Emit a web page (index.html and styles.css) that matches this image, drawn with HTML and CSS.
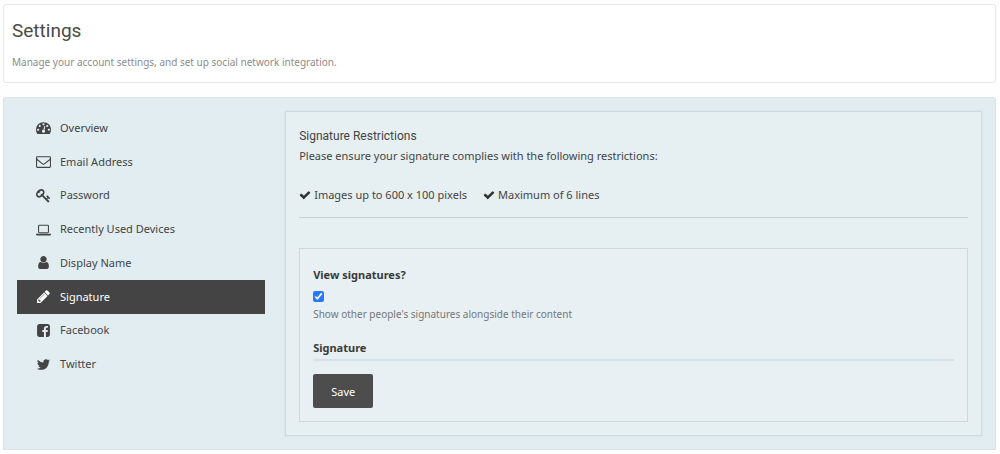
FILE: index.html
```html
<!DOCTYPE html>
<html lang="en">
<head>
<meta charset="utf-8">
<title>Settings</title>
<link rel="stylesheet" href="styles.css">
</head>
<body>
  <header class="page-header">
    <h1>Settings</h1>
    <p>Manage your account settings, and set up social network integration.</p>
  </header>

  <main class="settings">
    <nav>
      <ul class="side-menu">
        <li><a href="#overview"><svg class="icon" viewBox="0 0 1792 1792"><path d="M384 1152q0-53-37.5-90.5t-90.5-37.5-90.5 37.5-37.5 90.5 37.5 90.5 90.5 37.5 90.5-37.5 37.5-90.5zm192-448q0-53-37.5-90.5t-90.5-37.5-90.5 37.5-37.5 90.5 37.5 90.5 90.5 37.5 90.5-37.5 37.5-90.5zm428 481l101-382q6-26-7.5-48.5t-38.5-29.5-48 6.5-30 39.5l-101 382q-60 5-107 43.5t-63 98.5q-20 77 20 146t117 89 146-20 89-117q16-60-6-117t-72-91zm660-33q0-53-37.5-90.5t-90.5-37.5-90.5 37.5-37.5 90.5 37.5 90.5 90.5 37.5 90.5-37.5 37.5-90.5zm-640-640q0-53-37.5-90.5t-90.5-37.5-90.5 37.5-37.5 90.5 37.5 90.5 90.5 37.5 90.5-37.5 37.5-90.5zm448 192q0-53-37.5-90.5t-90.5-37.5-90.5 37.5-37.5 90.5 37.5 90.5 90.5 37.5 90.5-37.5 37.5-90.5zm320 448q0 261-141 483-19 29-54 29h-1402q-35 0-54-29-141-221-141-483 0-182 71-348t191-286 286-191 348-71 348 71 286 191 191 286 71 348z"/></svg>Overview</a></li>
        <li><a href="#email"><svg class="icon" viewBox="0 0 1792 1792"><path d="M1664 1504v-768q-32 36-69 66-268 206-426 338-51 43-83 67t-86.5 48.5-102.5 24.5h-2q-48 0-102.5-24.5t-86.5-48.5-83-67q-158-132-426-338-37-30-69-66v768q0 13 9.5 22.5t22.5 9.5h1472q13 0 22.5-9.5t9.5-22.5zm0-1051v-24.5l-.5-13-3-12.5-5.5-9-9-7.5-14-2.5h-1472q-13 0-22.5 9.5t-9.5 22.5q0 168 147 284 193 152 401 317 6 5 35 29.5t46 37.5 44.5 31.5 50.5 27.5 43 9h2q20 0 43-9t50.5-27.5 44.5-31.5 46-37.5 35-29.5q208-165 401-317 54-43 100.5-115.5t46.5-131.5zm128-37v1088q0 66-47 113t-113 47h-1472q-66 0-113-47t-47-113v-1088q0-66 47-113t113-47h1472q66 0 113 47t47 113z"/></svg>Email Address</a></li>
        <li><a href="#password"><svg class="icon" viewBox="0 0 1792 1792"><path d="M832 512q0-80-56-136t-136-56-136 56-56 136q0 42 19 83-41-19-83-19-80 0-136 56t-56 136 56 136 136 56 136-56 56-136q0-42-19-83 41 19 83 19 80 0 136-56t56-136zm851 704q0 17-49 66t-66 49q-9 0-28.5-16t-36.5-33-38.5-40-24.5-26l-96 96 220 220q28 28 28 68 0 42-39 81t-81 39q-40 0-68-28l-671-671q-176 131-365 131-163 0-265.5-102.5t-102.5-265.5q0-160 95-313t248-248 313-95q163 0 265.5 102.5t102.5 265.5q0 189-131 365l355 355 96-96q-3-3-26-24.5t-40-38.5-33-36.5-16-28.5q0-17 49-66t66-49q13 0 23 10 6 6 46 44.5t82 79.5 86.5 86 73 78 28.5 41z"/></svg>Password</a></li>
        <li><a href="#devices"><svg class="icon" viewBox="0 0 1792 1792"><path fill-rule="evenodd" d="M400 320h992q66 0 113 47t47 113v704q0 66-47 113t-113 47h-992q-66 0-113-47t-47-113v-704q0-66 47-113t113-47zm0 128q-32 0-32 32v704q0 32 32 32h992q32 0 32-32v-704q0-32-32-32zM0 1408h1792v96q0 40-47 68t-113 28h-1472q-66 0-113-28t-47-68z"/></svg>Recently Used Devices</a></li>
        <li><a href="#name"><svg class="icon" viewBox="0 0 1792 1792"><path d="M1536 1399q0 109-62.5 187t-150.5 78h-854q-88 0-150.5-78t-62.5-187q0-85 8.5-160.5t31.5-152 58.5-131 94-89 134.5-34.5q131 128 313 128t313-128q76 0 134.5 34.5t94 89 58.5 131 31.5 152 8.5 160.5zm-256-887q0 159-112.5 271.5t-271.5 112.5-271.5-112.5-112.5-271.5 112.5-271.5 271.5-112.5 271.5 112.5 112.5 271.5z"/></svg>Display Name</a></li>
        <li><a href="#signature" class="active"><svg class="icon" viewBox="0 0 1792 1792"><path d="M491 1536l91-91-235-235-91 91v107h128v128h107zm523-928q0-22-22-22-10 0-17 7l-542 542q-7 7-7 17 0 22 22 22 10 0 17-7l542-542q7-7 7-17zm-54-192l416 416-832 832h-416v-416zm683 96q0 53-37 90l-166 166-416-416 166-165q36-38 90-38 53 0 91 38l235 234q37 39 37 91z"/></svg>Signature</a></li>
        <li><a href="#facebook"><svg class="icon" viewBox="0 0 1792 1792"><path d="M1376 128q119 0 203.5 84.5t84.5 203.5v960q0 119-84.5 203.5t-203.5 84.5h-188v-595h199l30-232h-229v-148q0-56 23.5-84t91.5-28l122-1v-207q-63-9-178-9-136 0-217.5 80t-81.5 226v171h-200v232h200v595h-532q-119 0-203.5-84.5t-84.5-203.5v-960q0-119 84.5-203.5t203.5-84.5h960z"/></svg>Facebook</a></li>
        <li><a href="#twitter"><svg class="icon" viewBox="0 0 1792 1792"><path d="M1684 408q-67 98-162 167 1 14 1 42 0 130-38 259.5t-115.5 248.5-184.5 210.5-258 146-323 54.5q-271 0-496-145 35 4 78 4 225 0 401-138-105-2-188-64.5t-114-159.5q33 5 61 5 43 0 85-11-112-23-185.5-111.5t-73.5-205.5v-4q68 38 146 41-66-44-105-115t-39-154q0-88 44-163 121 149 294.5 238.5t371.5 99.5q-8-38-8-74 0-134 94.5-228.5t228.5-94.5q140 0 236 102 109-21 205-78-37 115-142 178 93-10 186-50z"/></svg>Twitter</a></li>
      </ul>
    </nav>

    <section class="panel">
      <h2>Signature Restrictions</h2>
      <p class="intro">Please ensure your signature complies with the following restrictions:</p>
      <ul class="restrictions">
        <li><svg class="check" viewBox="0 0 1792 1792"><path d="M1671 566q0 40-28 68l-724 724-136 136q-28 28-68 28t-68-28l-136-136-362-362q-28-28-28-68t28-68l136-136q28-28 68-28t68 28l294 295 656-657q28-28 68-28t68 28l136 136q28 28 28 68z"/></svg>Images up to 600 x 100 pixels</li>
        <li><svg class="check" viewBox="0 0 1792 1792"><path d="M1671 566q0 40-28 68l-724 724-136 136q-28 28-68 28t-68-28l-136-136-362-362q-28-28-28-68t28-68l136-136q28-28 68-28t68 28l294 295 656-657q28-28 68-28t68 28l136 136q28 28 28 68z"/></svg>Maximum of 6 lines</li>
      </ul>

      <form class="signature-form" action="" method="post">
        <label class="form-lbl" for="viewSigs">View signatures?</label>
        <input type="checkbox" id="viewSigs" name="viewsigs" checked>
        <p class="hint">Show other people's signatures alongside their content</p>
        <h3 class="form-lbl sig-title">Signature</h3>
        <button type="submit">Save</button>
      </form>
    </section>
  </main>
</body>
</html>
```

FILE: styles.css
```css
* {
  box-sizing: border-box;
}

body {
  margin: 0;
  padding: 4px 4px 0 3px;
  background-color: #fefefe;
  color: #444;
  font-family: "Noto Sans", "DejaVu Sans", sans-serif;
  font-size: 11px;
  line-height: 20px;
}

h1, h2, h3, p, ul {
  margin: 0;
  padding: 0;
}

ul {
  list-style: none;
}

/* page title */
.page-header {
  padding: 12px 8px 10px;
  border: 1px solid #e8e6e7;
  border-radius: 3px;
  background-color: #fff;
  margin-bottom: 14px;
}

.page-header h1 {
  font-family: Roboto, sans-serif;
  font-size: 19px;
  font-weight: normal;
  line-height: 28px;
  color: #4a4a4a;
}

.page-header p {
  margin-top: 7px;
  font-size: 10px;
  color: #8c8c8c;
}

/* main area */
.settings {
  display: grid;
  grid-template-columns: 26fr 73fr;
  gap: 20px;
  padding: 13px;
  border: 1px solid #dde2e4;
  border-radius: 3px;
  background-color: #e2edf1;
  box-shadow: 0 1px 1px #d5dadc;
}

.side-menu {
  display: grid;
  grid-auto-rows: 1fr;
  height: 270px;
}

.side-menu a {
  display: flex;
  align-items: center;
  gap: 9px;
  height: 100%;
  padding-left: 19px;
  color: #444;
  text-decoration: none;
}

.side-menu a.active {
  background-color: #444;
  color: #fff;
}

.icon {
  width: 15px;
  height: 15px;
  fill: currentColor;
}

.panel {
  padding: 14px 13px 13px;
  border: 1px solid #cfdadd;
  background-color: #e6eff2;
  box-shadow: 0 0 2px #cfdadd;
}

.panel h2 {
  font-family: Roboto, sans-serif;
  font-size: 12px;
  font-weight: normal;
}

.restrictions {
  display: flex;
  gap: 16px;
  margin: 19px 0 30px;
  padding-bottom: 12px;
  border-bottom: 1px solid #c5d0d3;
}

.restrictions li {
  display: flex;
  align-items: center;
  gap: 3px;
}

.check {
  width: 12px;
  height: 12px;
  fill: #333;
}

/* signature form */
.signature-form {
  padding: 16px 13px 13px;
  border: 1px solid #cfd9dc;
  background-color: #e8f0f3;
}

.form-lbl {
  display: block;
  font-size: 11px;
  font-weight: bold;
  color: #3a3a3a;
}

.signature-form input[type="checkbox"] {
  display: block;
  width: 11px;
  height: 11px;
  margin: 6px 0 2px;
  accent-color: #2878ff;
}

.hint {
  font-size: 10px;
  color: #777;
}

.sig-title {
  margin: 14px 0 13px;
  padding-bottom: 1px;
  border-bottom: 2px solid #d5e1e8;
}

.signature-form button {
  height: 34px;
  padding: 0 18px;
  border: 0;
  border-radius: 2px;
  background-color: #4d4d4d;
  color: #fff;
  font-family: inherit;
  font-size: 11px;
  cursor: pointer;
}
```
